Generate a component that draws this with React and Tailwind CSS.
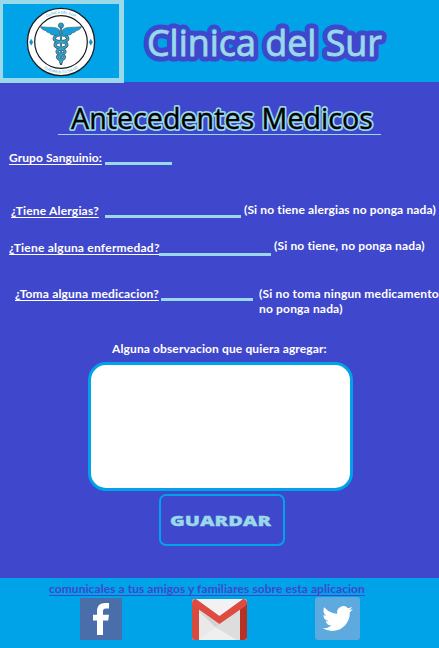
const textBase = "block whitespace-nowrap text-[12px] leading-4 font-bold [font-variant-ligatures:none]";
const underlined = "underline decoration-1 underline-offset-[1.5px]";

function Label({ className, children }) {
  return <span className={`${textBase} ${underlined} ${className}`}>{children}</span>;
}

function Hint({ className, children }) {
  return <span className={`${textBase} ${className}`}>{children}</span>;
}

function Line({ className }) {
  return <input aria-label="respuesta" className={`block h-[3px] shrink-0 bg-[#99d9ea] p-0 outline-none ${className}`} />;
}

function Caduceus() {
  return (
    <svg viewBox="0 0 70 70" className="h-[70px] w-[70px]">
      <circle cx="35" cy="35" r="33.6" fill="#fff" stroke="#1b2025" strokeWidth="1.3" />
      <circle cx="35" cy="35" r="26.3" fill="#fff" stroke="#15191d" strokeWidth="1.2" />
      <defs>
        <path id="arcTop" d="M6.5 35a28.5 28.5 0 0 1 57 0" />
        <path id="arcBottom" d="M3.8 35a31.2 31.2 0 0 0 62.4 0" />
      </defs>
      <g fill="#36a6d0" fontFamily="Liberation Sans, sans-serif" fontSize="3.6" textAnchor="middle">
        <text><textPath href="#arcTop" startOffset="50%" textLength="30">CLINICA DEL SUR</textPath></text>
        <text><textPath href="#arcBottom" startOffset="50%" textLength="36">CUIDAMOS TU SALUD</textPath></text>
      </g>
      <path d="M5.2 32.2l1.7 3-1.7 3-1.7-3zM64.8 32.2l1.7 3-1.7 3-1.7-3z" fill="#168cc0" stroke="#168cc0" strokeWidth=".5" />
      <g fill="#169fd6" stroke="#46545c" strokeWidth=".5">
        <path d="M34 24c-2-5-9-3-20-4.500 2 3 4 4 6 4.200 0 1 2 2.200 4 2.200 0 1.500 2 2.200 3.700 2 .5 1.500 4.300 2.500 6.300 1z" />
        <path d="M36 24c2-5 9-3 20-4.500-2 3-4 4-6 4.200 0 1-2 2.200-4 2.200 0 1.500-2 2.200-3.700 2-.5 1.500-4.300 2.500-6.300 1z" />
      </g>
      <path d="M35 20v38" stroke="#46545c" strokeWidth="2.200" />
      <path d="M31 29.500c-3-.5-4 3-1 4.200 4 1.500 11 .5 11 4.300s-10 3-10 6.500 7.500 2.500 7.500 5.500-5 2-3.500 6M39 29.500c3-.5 4 3 1 4.200-4 1.500-11 .5-11 4.300s10 3 10 6.500-7.500 2.500-7.500 5.500 5 2 3.500 6" fill="none" stroke="#46545c" strokeWidth="3.100" />
      <path d="M31 29.500c-3-.5-4 3-1 4.200 4 1.500 11 .5 11 4.300s-10 3-10 6.500 7.500 2.500 7.500 5.500-5 2-3.500 6M39 29.500c3-.5 4 3 1 4.200-4 1.500-11 .5-11 4.300s10 3 10 6.500-7.500 2.500-7.500 5.500 5 2 3.500 6" fill="none" stroke="#29a5d5" strokeWidth="1.700" />
      <path d="M35 20v35" stroke="#38a5cd" strokeWidth="1.200" />
      <circle cx="35" cy="18.500" r="2.600" fill="#169fd6" stroke="#46545c" strokeWidth=".7" />
    </svg>
  );
}

function FacebookIcon() {
  return (
    <svg viewBox="0 0 42 42" className="block h-[42px] w-[42px]">
      <path fill="#4a6ea9" d="M0 0h42v42H0z" />
      <path fill="#fff" d="M17 37V22.500h-4v-5.700h4v-3.300C17 7.800 20 5 25 5h4v5.600h-3c-2.300 0-3 1-3 3v3.200h6l-.8 5.700H23V37z" />
    </svg>
  );
}

function GmailIcon() {
  return (
    <svg viewBox="0 0 55 41" className="block h-[41px] w-[55px]">
      <rect width="55" height="41" rx="3" fill="#e9e9e9" />
      <path fill="#cfcfcf" d="M7 12l20.500 13L48 11v30H36z" opacity=".45" />
      <path fill="#cfcfcf" d="M7 12l20.500 13-4 3z" opacity=".8" />
      <path fill="#efefef" d="M7 41l16-13 22 13z" />
      <path fill="#f2f2f2" d="M4 0h47L27.500 18z" />
      <path fill="#d54b3d" d="M0 4l7 5v32H3a3 3 0 0 1-3-3z" />
      <path fill="#b63224" d="M55 4l-7 5v32h4a3 3 0 0 0 3-3z" />
      <path fill="#de4b40" d="M0 3.500C0 1 2 0 4 0l23.500 17L51 0c2 0 4 1 4 3.500 0 2-1 3-2 3.800L27.500 25 2 7.300C1 6.500 0 5.500 0 3.500z" />
    </svg>
  );
}

function TwitterIcon() {
  return (
    <svg viewBox="0 0 45 43" className="block h-[43px] w-[45px]">
      <rect width="45" height="43" rx="3" fill="#5ea9dd" />
      <g transform="translate(7.200 6.300) scale(1.280 1.270)">
        <path fill="#fff" d="M23.950 4.570a10 10 0 0 1-2.820.780 4.960 4.960 0 0 0 2.160-2.730 9.900 9.900 0 0 1-3.130 1.190 4.920 4.920 0 0 0-8.380 4.480C7.690 8.090 4.070 6.130 1.640 3.160a4.820 4.820 0 0 0-.67 2.480c0 1.710.87 3.210 2.190 4.100a4.900 4.900 0 0 1-2.230-.620v.060a4.920 4.920 0 0 0 3.950 4.830 5 5 0 0 1-2.210.080 4.940 4.940 0 0 0 4.600 3.420A9.870 9.870 0 0 1 0 19.540a13.990 13.990 0 0 0 7.560 2.210c9.050 0 14-7.500 14-13.980 0-.210 0-.420-.020-.630a9.940 9.940 0 0 0 2.410-2.570z" />
      </g>
    </svg>
  );
}

export default function App() {
  return (
    <div className="flex h-[648px] w-[439px] flex-col overflow-hidden bg-[#3f48cc] font-['Lato',sans-serif] text-white">
      <header className="flex h-[82px] shrink-0 bg-[#00a2e8]">
        <div className="flex h-[83px] w-[124px] shrink-0 items-start justify-center border-t-4 border-r-5 border-b-5 border-l-3 border-[#99d9ea] pt-[3px]">
          <Caduceus />
        </div>
        <h1 className="h-[82px] w-[315px]">
          <svg viewBox="124 0 315 82" className="block h-full w-full">
            <text x="147" y="55.500" textLength="235" lengthAdjust="spacingAndGlyphs" fontFamily="Open Sans, sans-serif" fontSize="36.500" fill="#3f48cc" stroke="#3f48cc" strokeWidth="11" strokeLinejoin="round">Clinica del Sur</text>
            <text aria-hidden="true" x="147" y="55.500" textLength="235" lengthAdjust="spacingAndGlyphs" fontFamily="Open Sans, sans-serif" fontSize="36.500" fill="#99d9ea" stroke="#99d9ea" strokeWidth=".9">Clinica del Sur</text>
          </svg>
        </h1>
      </header>

      <main className="flex h-[496px] shrink-0 flex-col">
        <h2 className="ml-[58px] mt-[18px] h-[35px] w-[323px] shrink-0 border-b border-[#99d9ea]">
          <svg viewBox="58 100 323 34" className="block h-[34px] w-full overflow-visible">
            <text x="71" y="129" textLength="302" lengthAdjust="spacingAndGlyphs" fontFamily="Open Sans, sans-serif" fontSize="30" fill="#99d9ea" stroke="#99d9ea" strokeWidth="4" strokeLinejoin="round">Antecedentes Medicos</text>
            <text aria-hidden="true" x="71" y="129" textLength="302" lengthAdjust="spacingAndGlyphs" fontFamily="Open Sans, sans-serif" fontSize="30" fill="#000" stroke="#000" strokeWidth=".4">Antecedentes Medicos</text>
          </svg>
        </h2>

        <div className="mt-[14px] flex h-4 shrink-0 pl-[9px]">
          <Label className="mt-px w-24 tracking-[0.07px]">Grupo Sanguinio:</Label>
          <Line className="mt-[13px] w-[67px]" />
        </div>

        <div className="mt-9 flex h-[18px] shrink-0 pl-[11px]">
          <Label className="mt-[2px] w-[94px] tracking-[0.18px]">¿Tiene Alergias?</Label>
          <Line className="mt-[14px] w-[136px]" />
          <Hint className="ml-[3px] mt-px tracking-[0.13px]">(Si no tiene alergias no ponga nada)</Hint>
        </div>

        <div className="mt-[19px] flex h-[19px] shrink-0 pl-[9px]">
          <Label className="mt-[2px] w-[150px] tracking-[0.23px]">¿Tiene alguna enfermedad?</Label>
          <Line className="mt-[15px] w-[112px]" />
          <Hint className="ml-[3px] tracking-[0.15px]">(Si no tiene, no ponga nada)</Hint>
        </div>

        <div className="mt-7 flex h-8 shrink-0 pl-[15px]">
          <Label className="mt-px w-[146px] tracking-[0.16px]">¿Toma alguna medicacion?</Label>
          <Line className="mt-[13px] w-[92px]" />
          <Hint className="ml-[6px] mt-px leading-[15px] tracking-[0.17px]">(Si no toma ningun medicamento<br />no ponga nada)</Hint>
        </div>

        <label htmlFor="observacion" className={`${textBase} mt-6 h-4 shrink-0 pl-[112px] tracking-[0.12px]`}>
          Alguna observacion que quiera agregar:
        </label>
        <textarea id="observacion" className="ml-[88px] mt-[5px] block h-[129px] w-[265px] shrink-0 resize-none rounded-[18px] border-3 border-[#00a2e8] bg-white text-black outline-none" />

        <button className="ml-[159px] mt-[3px] h-[52px] w-[126px] shrink-0 rounded-[7px] border-2 border-[#00a2e8]">
          <svg viewBox="161 496 122 48" className="block h-full w-full">
            <text x="170" y="525.500" textLength="101" lengthAdjust="spacingAndGlyphs" fontFamily="Open Sans, sans-serif" fontSize="14.500" fontWeight="800" fill="#99d9ea" stroke="#99d9ea" strokeWidth=".3">GUARDAR</text>
          </svg>
        </button>
      </main>

      <footer className="h-[70px] shrink-0 bg-[#00a2e8] pt-[3px]">
        <p className={`${textBase} ${underlined} ml-[49px] tracking-[0.07px] text-[#3f48cc]`}>
          comunicales a tus amigos y familiares sobre esta aplicacion
        </p>
        <div className="flex pl-20">
          <a className="mt-px"><FacebookIcon /></a>
          <a className="ml-[70px] mt-[2px]"><GmailIcon /></a>
          <a className="ml-[68px]"><TwitterIcon /></a>
        </div>
      </footer>
    </div>
  );
}
